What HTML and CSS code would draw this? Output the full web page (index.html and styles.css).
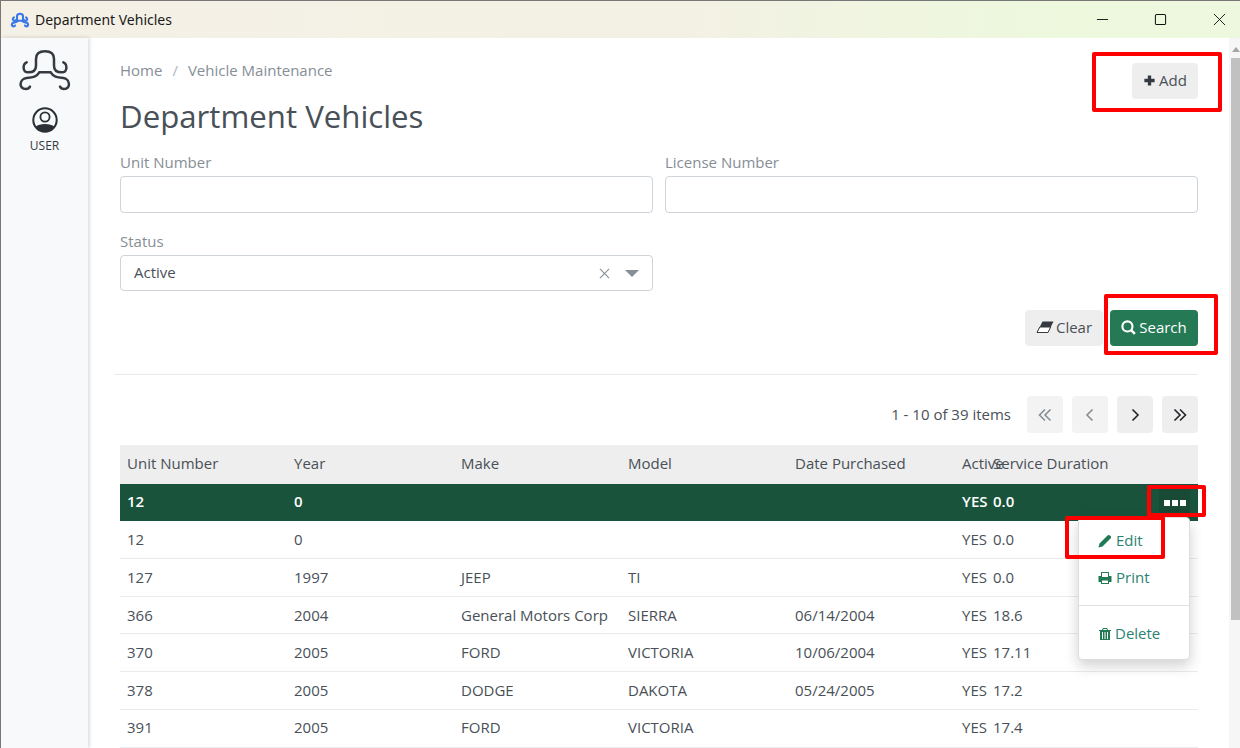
FILE: index.html
```html
<!DOCTYPE html>
<html lang="en">
<head>
<meta charset="utf-8">
<title>Department Vehicles</title>
<link rel="stylesheet" href="styles.css">
</head>
<body>
<div class="window">
  <header class="titlebar">
    <svg class="app-icon" viewBox="15 8 180 140"><path d="M50 55C38 60 36 85 55 85C70 85 78 80 78 65V45C78 30 88 22 105 22S132 30 132 45V65C132 80 140 85 155 85C174 85 172 60 160 55M88 85C80 98 70 100 50 102C28 104 24 135 48 135C54 135 58 132 60 128M122 85C130 98 140 100 160 102C182 104 186 135 162 135C156 135 152 132 150 128M88 85H122" fill="none" stroke="#3b78e7" stroke-width="19" stroke-linecap="round"/></svg>
    <span class="window-title">Department Vehicles</span>
    <div class="window-controls">
      <svg viewBox="0 0 14 14"><path d="M1 7H13" stroke="#111" fill="none"/></svg>
      <svg viewBox="0 0 14 14"><rect x="1.5" y="1.5" width="11" height="11" rx="1.5" stroke="#111" fill="none" stroke-width="1.1"/></svg>
      <svg viewBox="0 0 14 14"><path d="M1 1L13 13M13 1L1 13" stroke="#111" fill="none"/></svg>
    </div>
  </header>
  <div class="body">
    <aside class="sidebar">
      <svg class="logo" viewBox="0 0 210 168"><path d="M50 55C38 60 36 85 55 85C70 85 78 80 78 65V45C78 30 88 22 105 22S132 30 132 45V65C132 80 140 85 155 85C174 85 172 60 160 55M88 85C80 98 70 100 50 102C28 104 24 135 48 135C54 135 58 132 60 128M122 85C130 98 140 100 160 102C180 104 184 135 162 135C156 135 152 132 150 128M88 85H122" fill="none" stroke="#343a40" stroke-width="7.500" stroke-linecap="round"/></svg>
      <svg class="user-icon" viewBox="0 0 26 26"><circle cx="13" cy="13" r="11.7" fill="none" stroke="#2b3036" stroke-width="2"/><circle cx="13" cy="10" r="4.600" fill="none" stroke="#2b3036" stroke-width="1.800"/><path d="M3.800 19.500C7 16 19 16 22.200 19.500C19 26 7 26 3.800 19.500Z" fill="#2b3036"/></svg>
      <span class="user-label">USER</span>
    </aside>
    <main class="main">
      <div class="top">
        <div>
          <nav class="breadcrumb"><span>Home</span><span class="sep">/</span><span>Vehicle Maintenance</span></nav>
          <h1>Department Vehicles</h1>
        </div>
        <button class="btn btn-light">
          <svg class="ico" viewBox="0 0 14 14"><path d="M5.200 1.500H8.800V5.200H12.500V8.800H8.800V12.500H5.200V8.800H1.500V5.200H5.200Z" fill="#343a40"/></svg>Add
        </button>
      </div>
      <div class="filters">
        <label class="field">
          <span class="label">Unit Number</span>
          <span class="input"></span>
        </label>
        <label class="field">
          <span class="label">License Number</span>
          <span class="input"></span>
        </label>
        <label class="field">
          <span class="label">Status</span>
          <span class="input select">
            <span class="select-value">Active</span>
            <svg class="clear-x" viewBox="0 0 12 12"><path d="M1 1L11 11M11 1L1 11" stroke="#868e96" stroke-width="1.200" fill="none"/></svg>
            <span class="caret"></span>
          </span>
        </label>
      </div>
      <div class="actions">
        <button class="btn btn-light btn-clear">
          <svg class="ico eraser" viewBox="0 0 18 14"><path d="M6.500 1.500H17.500L12 12.500H1Z" fill="#343a40"/><path d="M3.800 7H14.700L12 12.500H1Z" fill="#fff" stroke="#343a40"/></svg>Clear
        </button>
        <button class="btn btn-green">
          <svg class="ico ico-search" viewBox="0 0 14 14"><circle cx="6" cy="6" r="4.700" fill="none" stroke="#fff" stroke-width="2"/><path d="M9.200 9.200L13 13" stroke="#fff" stroke-width="2.400"/></svg>Search
        </button>
      </div>
      <hr class="divider">
      <div class="pager">
        <span class="pager-info">1 - 10 of 39 items</span>
        <button class="page-btn disabled"><svg viewBox="0 0 16 16"><path d="M8 2.500L2.500 8L8 13.500M13.500 2.500L8 8L13.500 13.500" fill="none" stroke="#868e96" stroke-width="1.600"/></svg></button>
        <button class="page-btn disabled"><svg viewBox="0 0 16 16"><path d="M10.500 2.500L5 8L10.500 13.500" fill="none" stroke="#868e96" stroke-width="1.600"/></svg></button>
        <button class="page-btn"><svg viewBox="0 0 16 16"><path d="M5.500 2.500L11 8L5.500 13.500" fill="none" stroke="#212529" stroke-width="1.600"/></svg></button>
        <button class="page-btn"><svg viewBox="0 0 16 16"><path d="M2.500 2.500L8 8L2.500 13.500M8 2.500L13.500 8L8 13.500" fill="none" stroke="#212529" stroke-width="1.600"/></svg></button>
      </div>
      <div class="table">
        <div class="row head"><span>Unit Number</span><span>Year</span><span>Make</span><span>Model</span><span>Date Purchased</span><span>Active</span><span>Service Duration</span></div>
        <div class="row selected"><span>12</span><span>0</span><span></span><span></span><span></span><span>YES</span><span>0.0</span>
          <button class="dots"><i></i><i></i><i></i></button>
        </div>
        <div class="row"><span>12</span><span>0</span><span></span><span></span><span></span><span>YES</span><span>0.0</span></div>
        <div class="row"><span>127</span><span>1997</span><span>JEEP</span><span>TI</span><span></span><span>YES</span><span>0.0</span></div>
        <div class="row"><span>366</span><span>2004</span><span>General Motors Corp</span><span>SIERRA</span><span>06/14/2004</span><span>YES</span><span>18.6</span></div>
        <div class="row"><span>370</span><span>2005</span><span>FORD</span><span>VICTORIA</span><span>10/06/2004</span><span>YES</span><span>17.11</span></div>
        <div class="row"><span>378</span><span>2005</span><span>DODGE</span><span>DAKOTA</span><span>05/24/2005</span><span>YES</span><span>17.2</span></div>
        <div class="row last"><span>391</span><span>2005</span><span>FORD</span><span>VICTORIA</span><span></span><span>YES</span><span>17.4</span></div>
      </div>
      <div class="menu">
        <a class="menu-item"><svg class="wide" viewBox="0 0 14 14"><path d="M.5 13.500L1.500 9.500L9.500 1.500C10.300.7 11.200.7 12 1.500L12.500 2C13.300 2.800 13.300 3.700 12.500 4.500L4.500 12.500Z" fill="#227a55"/></svg>Edit</a>
        <a class="menu-item"><svg class="wide" viewBox="0 0 14 14"><path d="M3 1H11V5H13.500V11H11V13H3V11H.5V5H3ZM4 2V6H10V2ZM4 9.500V12H10V9.500Z" fill="#227a55" fill-rule="evenodd"/></svg>Print</a>
        <span class="menu-line"></span>
        <a class="menu-item"><svg viewBox="0 0 14 14"><path d="M5 1H9L10 3H13V4H12V13H2V4H1V3H4ZM5 3H9L8.500 2H5.500ZM4 5V12H5V5ZM6.500 5V12H7.500V5ZM9 5V12H10V5Z" fill="#227a55" fill-rule="evenodd"/></svg>Delete</a>
      </div>
    </main>
    <div class="scrollbar"><span class="arrow"></span><span class="thumb"></span></div>
  </div>
  <span class="mark mark-add"></span>
  <span class="mark mark-search"></span>
  <span class="mark mark-dots"></span>
  <span class="mark mark-edit"></span>
</div>
</body>
</html>
```
FILE: styles.css
```css
* { box-sizing: border-box; }
html, body { margin: 0; height: 100%; overflow: hidden; }
body { font-family: "Open Sans", "Noto Sans", sans-serif; font-size: 15px; color: #495057; background: #fff; }
.window { position: relative; width: 1240px; height: 748px; overflow: hidden; border-top: 1px solid #777; border-left: 1px solid #777; display: flex; flex-direction: column; }
.titlebar { height: 37px; flex: none; display: flex; align-items: center; padding-left: 9px; background: linear-gradient(90deg, #f4f0e6 0%, #f3f1e4 55%, #edf8dd 85%, #eef8de 100%); }
.app-icon { width: 20px; height: 20px; margin-right: 5px; }
.window-title { font-family: "Noto Sans", sans-serif; font-size: 14px; color: #1a1a1a; }
.window-controls { margin-left: auto; display: flex; }
.window-controls svg { width: 13px; height: 13px; margin-left: 45px; }
.window-controls svg:last-child { margin-right: 14px; margin-left: 46px; }
.body { flex: 1; display: flex; min-height: 0; }
.sidebar { width: 87px; flex: none; background: #f8f9fa; box-shadow: 1px 0 4px rgba(0,0,0,.18); display: flex; flex-direction: column; align-items: center; padding-top: 6px; position: relative; z-index: 1; }
.logo { width: 70px; height: 56px; display: block; }
.user-icon { width: 26px; height: 26px; margin-top: 7px; }
.user-label { font-size: 12px; color: #343a40; margin-top: 5px; line-height: 16px; }
.main { position: relative; flex: 1; padding: 0 31px 0 32px; min-width: 0; }
.top { display: flex; justify-content: space-between; align-items: flex-start; padding-top: 22px; height: 115px; }
.breadcrumb { color: #868e96; line-height: 20px; display: flex; }
.sep { color: #adb5bd; margin: 0 10px; }
h1 { margin: 16px 0 0; font-weight: 400; font-size: 31.2px; line-height: 40px; color: #495057; }
.btn { border: 0; border-radius: 4px; height: 36px; font: inherit; display: inline-flex; align-items: center; justify-content: center; padding: 0 0 2px; cursor: pointer; }
.top .btn { width: 66px; margin-top: 3px; }
.ico { width: 13px; height: 13px; margin-right: 3px; }
.ico-search { width: 15px; height: 15px; }
.btn-light { background: #eee; color: #495057; }
.btn-green { background: #257a55; color: #fff; width: 88px; margin-left: 7px; }
.btn-clear { width: 78px; }
.eraser { width: 18px; height: 14px; margin-right: 2px; }
.filters { display: grid; grid-template-columns: 533px 533px; column-gap: 12px; row-gap: 19px; }
.field { display: flex; flex-direction: column; }
.label { color: #868e96; line-height: 18px; height: 23px; }
.input { height: 37px; border: 1px solid #ced4da; border-radius: 4px; background: #fff; display: block; }
.select { display: flex; align-items: center; padding: 0 13px; height: 36px; color: #495057; }
.select-value { flex: 1; padding-bottom: 2px; }
.clear-x { width: 11px; height: 11px; margin-right: 15px; }
.caret { width: 0; height: 0; border-left: 7px solid transparent; border-right: 7px solid transparent; border-top: 7px solid #868e96; }
.actions { display: flex; justify-content: flex-end; margin-top: 19px; }
.divider { border: 0; border-top: 1px solid #e9ecef; margin: 28px 0 0 -6px; }
.pager { display: flex; justify-content: flex-end; align-items: center; margin-top: 21px; height: 37px; }
.pager-info { margin-right: 16px; padding-bottom: 2px; color: #495057; }
.page-btn { width: 36px; height: 37px; border: 0; border-radius: 4px; background: #eee; margin-left: 9px; display: flex; align-items: center; justify-content: center; padding: 0; }
.pager-info + .page-btn { margin-left: 0; }
.page-btn.disabled { background: #f3f3f3; }
.page-btn svg { width: 16px; height: 16px; }
.table { margin-top: 12px; }
.row { position: relative; display: grid; grid-template-columns: repeat(5, 167px) 30px 1fr; height: 37.75px; padding-bottom: .6px; align-items: center; border-bottom: 1px solid #e9ecef; color: #495057; }
.row span { padding-left: 7px; white-space: nowrap; }
.row span:nth-child(7) { padding-left: 8px; }
.head { height: 39px; padding-bottom: 4px; background: #eee; border-bottom: 0; }
.selected { height: 37px; padding-bottom: 4px; background: #1a533b; color: #fff; font-weight: 600; border-bottom: 0; }
.last { height: 39px; padding-bottom: 2px; border-bottom: 2px solid #e9ecef; }
.dots { position: absolute; right: 8px; top: 4px; width: 31px; height: 29px; border: 0; border-radius: 3px; background: #184a35; display: flex; align-items: center; justify-content: center; gap: 2px; padding: 0; }
.dots i { width: 6px; height: 6px; background: #fff; display: block; }
.menu { position: absolute; left: 990px; top: 479px; width: 112px; height: 143px; background: #fff; border: 1px solid #ddd; border-radius: 4px; box-shadow: 0 6px 14px rgba(0,0,0,.18); padding-top: 4px; z-index: 2; }
.menu-item { display: flex; align-items: center; height: 37px; padding: 0 0 2px 19px; color: #2a8272; }
.menu-item svg { width: 14px; height: 14px; margin-right: 3px; flex: none; position: relative; top: 1px; }
.menu-item svg.wide { margin-right: 4px; }
.menu-line { display: block; border-top: 1px solid #e0e0e0; margin: 9px 0 9px; }
.scrollbar { width: 11px; flex: none; background: #f6f6f6; display: flex; flex-direction: column; align-items: flex-end; }
.arrow { height: 20px; width: 9px; display: flex; padding-top: 9px; position: relative; }
.arrow::after { content: ""; width: 0; height: 0; margin-left: 1px; border-left: 4px solid transparent; border-right: 4px solid transparent; border-bottom: 5px solid #a6a6a6; }
.thumb { width: 9px; height: 562px; background: #c1c1c1; }
.mark { position: absolute; border: 4px solid #f00; border-radius: 2px; z-index: 3; }
.mark-add { left: 1091px; top: 51px; width: 130px; height: 60px; }
.mark-search { left: 1103px; top: 293px; width: 114px; height: 61px; }
.mark-dots { left: 1146px; top: 484px; width: 59px; height: 32px; }
.mark-edit { left: 1064px; top: 515px; width: 100px; height: 43px; }
```
